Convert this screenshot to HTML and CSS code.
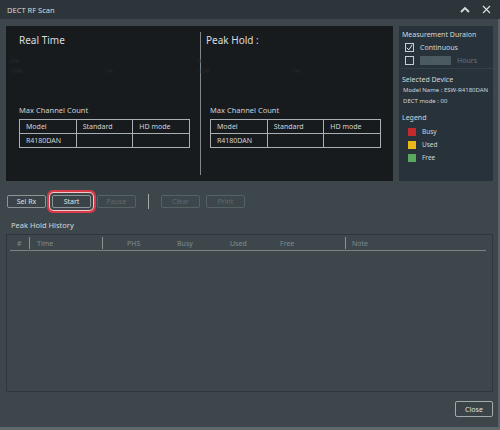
FILE: index.html
```html
<!DOCTYPE html>
<html lang="en">
<head>
    <meta charset="UTF-8">
    <title>DECT RF Scan</title>
    <link rel="stylesheet" href="styles.css">
</head>
<body>
    <div class="window">
        <!-- Barra de título -->
        <div class="titlebar">
            <span class="title">DECT RF Scan</span>
            <div class="title-icons">
                <svg width="10" height="7" viewBox="0 0 10 7"><path d="M1 6 L5 2 L9 6" fill="none" stroke="#d8dcde" stroke-width="1.8"/></svg>
                <svg width="9" height="9" viewBox="0 0 9 9"><path d="M1 1 L8 8 M8 1 L1 8" fill="none" stroke="#d8dcde" stroke-width="1.2"/></svg>
            </div>
        </div>

        <div class="content">
            <div class="top">
                <!-- Panel de escaneo -->
                <div class="scan-panel">
                    <div class="half">
                        <div class="half-title">Real Time</div>
                        <div class="axis">
                            <span>-5%</span>
                            <span>-10%<em>-1%</em></span>
                        </div>
                        <div class="count-label">Max Channel Count</div>
                        <table class="count-table">
                            <tr><td>Model</td><td>Standard</td><td>HD mode</td></tr>
                            <tr><td>R4180DAN</td><td></td><td></td></tr>
                        </table>
                    </div>
                    <div class="divider"></div>
                    <div class="half right-half">
                        <div class="half-title">Peak Hold :</div>
                        <div class="axis">
                            <span>-5</span>
                            <span>-10%<em>-1%</em></span>
                        </div>
                        <div class="count-label">Max Channel Count</div>
                        <table class="count-table">
                            <tr><td>Model</td><td>Standard</td><td>HD mode</td></tr>
                            <tr><td>R4180DAN</td><td></td><td></td></tr>
                        </table>
                    </div>
                </div>

                <!-- Panel lateral -->
                <div class="side-panel">
                    <div class="side-block">
                        <div class="side-title">Measurement Duraion</div>
                        <div class="check-row">
                            <span class="checkbox checked">
                                <svg width="7" height="7" viewBox="0 0 7 7"><path d="M0.8 3.8 L2.8 5.8 L6.2 0.8" fill="none" stroke="#e0e3e4" stroke-width="1"/></svg>
                            </span>
                            <span>Continuous</span>
                        </div>
                        <div class="check-row">
                            <span class="checkbox"></span>
                            <span class="hours-input">-- : --</span>
                            <span class="hours">Hours</span>
                        </div>
                    </div>
                    <div class="side-block device">
                        <div class="side-title">Selected Device</div>
                        <div class="device-line">Model Name : ESW-R4180DAN</div>
                        <div class="device-line">DECT mode : 00</div>
                        <div class="side-title legend-title">Legend</div>
                        <div class="legend-row"><span class="swatch busy"></span>Busy</div>
                        <div class="legend-row"><span class="swatch used"></span>Used</div>
                        <div class="legend-row"><span class="swatch free"></span>Free</div>
                    </div>
                </div>
            </div>

            <!-- Botones -->
            <div class="toolbar">
                <button class="btn">Sel Rx</button>
                <button class="btn selected">Start</button>
                <button class="btn" disabled>Pause</button>
                <span class="tool-sep"></span>
                <button class="btn" disabled>Clear</button>
                <button class="btn" disabled>Print</button>
            </div>

            <div class="history-label">Peak Hold History</div>
            <div class="history">
                <div class="history-head">
                    <div class="col col-num">#</div>
                    <div class="col col-time">Time</div>
                    <div class="col col-stats">
                        <span class="stat phs">PHS</span>
                        <span class="stat busy-col">Busy</span>
                        <span class="stat used-col">Used</span>
                        <span class="stat">Free</span>
                    </div>
                    <div class="col col-note">Note</div>
                </div>
            </div>

            <div class="footer">
                <button class="btn close-btn">Close</button>
            </div>
        </div>
    </div>
</body>
</html>
```

FILE: styles.css
```css
body {
    margin: 0;
    font-family: "Noto Sans", "Open Sans", sans-serif;
    background-color: #3d474b;
}
.window {
    width: 500px;
    height: 430px;
    box-sizing: border-box;
    background-color: #3d474b;
    border-bottom: 3px solid #5f696d;
    display: flex;
    flex-direction: column;
    overflow: hidden;
}
.titlebar {
    height: 19px;
    flex-shrink: 0;
    background-color: #2c353a;
    display: flex;
    align-items: center;
    justify-content: space-between;
    padding: 0 9px 0 7px;
}
.title {
    font-size: 7.5px;
    color: #d6dadc;
}
.title-icons {
    display: flex;
    align-items: center;
    gap: 12px;
}
.content {
    flex: 1;
    padding: 7px 5px 0 6px;
    border-left: 2px solid #4a5458;
    border-right: 2px solid #596367;
    margin-left: -2px;
    display: flex;
    flex-direction: column;
}
.top {
    display: flex;
    gap: 6px;
    height: 155px;
}
.scan-panel {
    width: 387px;
    background-color: #171b1e;
    display: flex;
}
.half {
    width: 194px;
    box-sizing: border-box;
    padding: 8px 0 0 13px;
    display: flex;
    flex-direction: column;
}
.right-half {
    width: 192px;
    padding-left: 5px;
}
.right-half .count-label,
.right-half .count-table {
    margin-left: 4px;
}
.divider {
    width: 1px;
    margin: 6px 0;
    background-color: #80878a;
}
.half-title {
    font-size: 10px;
    line-height: 12px;
    color: #d9dddf;
}
.axis {
    display: flex;
    flex-direction: column;
    font-size: 6px;
    line-height: 10px;
    color: #262c30;
    margin: 10px 0 0 -10px;
}
.axis em {
    font-style: normal;
    margin-left: 80px;
}
.count-label {
    font-size: 7.5px;
    color: #cfd3d5;
    margin-top: 29px;
    margin-bottom: 4px;
}
.count-table {
    width: 171px;
    border-collapse: collapse;
    table-layout: fixed;
}
.count-table td {
    border: 1px solid #a9afb2;
    height: 13px;
    padding: 0 0 0 6px;
    font-size: 7px;
    color: #d0d4d6;
}
.side-panel {
    width: 94px;
    background-color: #28323a;
    display: flex;
    flex-direction: column;
}
.side-block {
    padding: 3px 3px 2px 3px;
}
.device {
    border-top: 1px solid #353f46;
    padding-top: 5px;
}
.side-title {
    font-size: 7px;
    line-height: 11px;
    color: #d3d7d9;
}
.check-row {
    display: flex;
    align-items: center;
    gap: 6px;
    font-size: 7px;
    color: #d3d7d9;
    margin: 1px 0 0 3px;
    height: 12px;
}
.checkbox {
    width: 7px;
    height: 7px;
    border: 1px solid #c9cdcf;
    display: flex;
    align-items: center;
    justify-content: center;
}
.hours-input {
    width: 31px;
    height: 9px;
    background-color: #4b5a60;
    color: #5f6e74;
    font-size: 5px;
    line-height: 9px;
    text-align: center;
}
.hours {
    color: #68757a;
}
.device-line {
    font-size: 6px;
    line-height: 11px;
    color: #d0d4d6;
    margin-left: 1px;
}
.legend-title {
    margin-top: 5px;
    margin-bottom: 2px;
}
.legend-row {
    display: flex;
    align-items: center;
    gap: 6px;
    font-size: 6.5px;
    color: #d0d4d6;
    height: 13px;
    margin-left: 6px;
}
.swatch {
    width: 8px;
    height: 8px;
}
.swatch.busy { background-color: #c22a30; }
.swatch.used { background-color: #e8b719; }
.swatch.free { background-color: #5aa85e; }
.toolbar {
    display: flex;
    align-items: center;
    gap: 6px;
    margin: 14px 0 0 1px;
    height: 13px;
}
.btn {
    width: 39px;
    height: 13px;
    padding: 0;
    box-sizing: border-box;
    background-color: #3a4448;
    border: 1px solid #8c9498;
    border-radius: 2px;
    font-family: "Noto Sans", "Open Sans", sans-serif;
    font-size: 7px;
    color: #dde1e2;
}
.btn:disabled {
    border-color: #566166;
    color: #5d696e;
    background-color: #3d474b;
}
.btn.selected {
    box-shadow: 0 0 0 2px #3d474b, 0 0 0 3px #f1c8cb, 0 0 0 5px #d83a4a;
}
.tool-sep {
    width: 1px;
    height: 15px;
    background-color: #a4abae;
    margin: 0 6px;
}
.history-label {
    font-size: 7.5px;
    color: #d3d7d9;
    margin: 12px 0 0 5px;
    height: 14px;
}
.history {
    height: 158px;
    box-sizing: border-box;
    border: 1px solid #2e373b;
    padding: 1px 6px 0 3px;
}
.history-head {
    display: flex;
    height: 14px;
    border-bottom: 1px solid #7a8386;
    font-size: 7px;
    color: #7f8a8e;
}
.col {
    display: flex;
    align-items: center;
    box-sizing: border-box;
    height: 12px;
    margin-top: 1px;
}
.col-num {
    width: 19px;
    padding-left: 7px;
}
.col-time {
    width: 73px;
    padding-left: 7px;
    border-left: 1px solid #8b9396;
}
.col-stats {
    width: 243px;
    padding-left: 24px;
    border-left: 1px solid #8b9396;
}
.stat.phs { width: 50px; }
.stat.busy-col { width: 53px; }
.stat.used-col { width: 50px; }
.col-note {
    padding-left: 6px;
    border-left: 1px solid #8b9396;
}
.footer {
    display: flex;
    justify-content: flex-end;
    padding-top: 9px;
}
.close-btn {
    width: 38px;
    height: 16px;
    border-color: #a3aaad;
    font-size: 7px;
}
```
